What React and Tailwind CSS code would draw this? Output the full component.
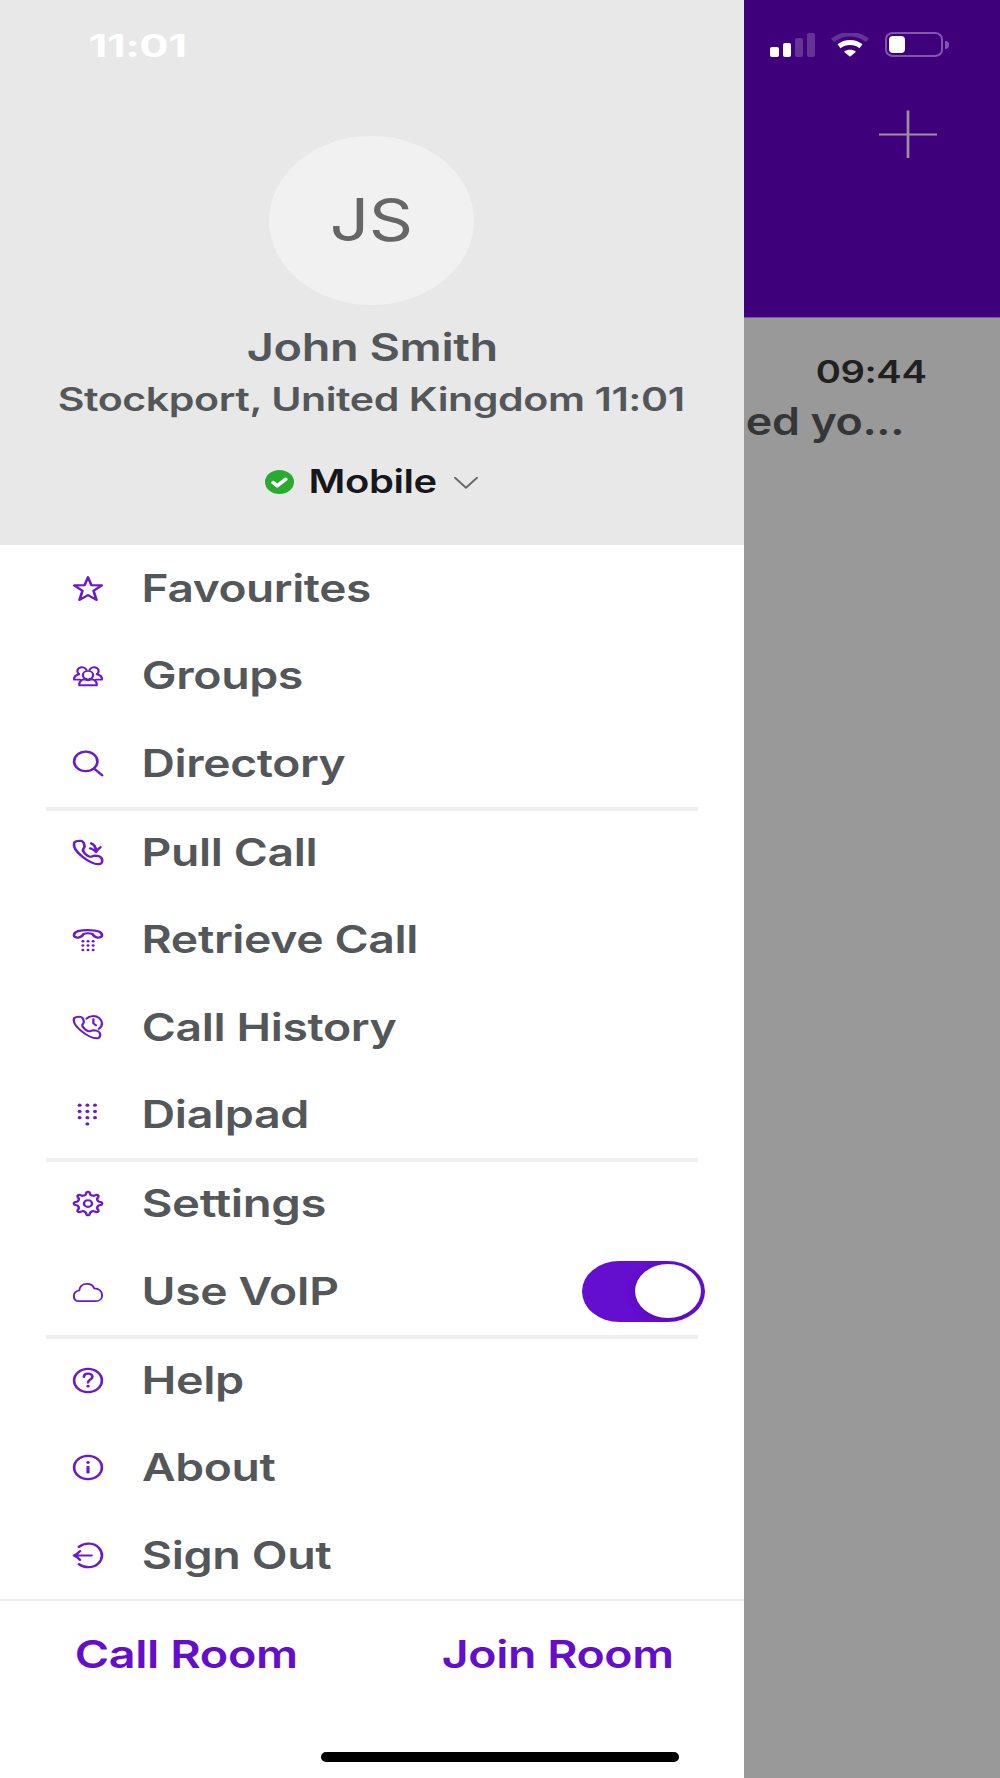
import { useLayoutEffect, useRef } from "react";

// Wide text: the ink of the label fills the width of its box.
function Wide({ children, className = "" }) {
  const box = useRef(null);
  const ink = useRef(null);
  useLayoutEffect(() => {
    const cs = getComputedStyle(ink.current);
    const ctx = document.createElement("canvas").getContext("2d");
    ctx.font = `${cs.fontWeight} ${cs.fontSize} Inter`;
    ctx.letterSpacing = cs.letterSpacing === "normal" ? "0px" : cs.letterSpacing;
    const m = ctx.measureText(children);
    const k = box.current.getBoundingClientRect().width / (m.actualBoundingBoxLeft + m.actualBoundingBoxRight);
    ink.current.style.transform = `translate(${m.actualBoundingBoxLeft * k}px, 0.15px) scaleX(${k})`;
  }, [children]);
  return (
    <span ref={box} className={`block shrink-0 whitespace-nowrap ${className}`}>
      <span ref={ink} className="inline-block origin-left">{children}</span>
    </span>
  );
}

function Icon({ children }) {
  return (
    <svg
      viewBox="0 0 24 24"
      preserveAspectRatio="none"
      className="block h-[25px] w-[30px] shrink-0 overflow-visible"
      fill="none"
      stroke="#6a1bc6"
      strokeWidth="2.150"
      strokeLinecap="round"
      strokeLinejoin="round"
    >
      {children}
    </svg>
  );
}

const dots = (xs, ys, r) =>
  ys.flatMap((y) => xs.map((x) => <circle key={`${x}-${y}`} cx={x} cy={y} r={r} fill="#6a1bc6" stroke="none" />));

const polar = (r, deg) => {
  const a = (deg * Math.PI) / 180;
  return `${(12 + r * Math.cos(a)).toFixed(2)} ${(12 + r * Math.sin(a)).toFixed(2)}`;
};

// Eight pointed, rounded teeth joined by shallow curved valleys.
const gearPath =
  Array.from({ length: 8 }, (_, i) => {
    const t = i * 45;
    return `${i ? "L" : "M"}${polar(8.6, t - 13)}L${polar(10.8, t - 6)}Q${polar(11.9, t)} ${polar(10.8, t + 6)}L${polar(8.6, t + 13)}Q${polar(7.9, t + 22.5)} ${polar(8.6, t + 32)}`;
  }).join("") + "Z";

const icons = {
  star: <path d="M12 1.200l2.700 7.600 8.300.3-6.600 5.100 2.400 8.700-6.800-4.500-6.800 4.500 2.400-8.700L1 9.100l8.300-.3z" />,
  groups: (
    <g strokeWidth="1.800">
      <circle cx="12" cy="11.600" r="4.100" />
      <path d="M5 21.300v-.8c0-2.500 1.400-4.200 3.800-4.900 1.900 1.100 4.500 1.100 6.400 0 2.400.7 3.800 2.400 3.800 4.900v.8z" />
      <path d="M5 10.800A3.700 3.700 0 1 1 10.600 6.400M19 10.800A3.700 3.700 0 1 0 13.400 6.400" />
      <path d="M4.600 10.800C2.200 11.500.8 13.300.8 15.900h5M19.400 10.800c2.400.7 3.800 2.500 3.800 5.100h-5" />
    </g>
  ),
  search: (
    <>
      <circle cx="10.200" cy="10" r="9.300" />
      <path d="M16.800 16.800l6.500 6.500" />
    </>
  ),
  pull: (
    <>
      <path d="M1 2.400C2.300.800 5 .600 6.700.900c1.600.300 2.600 3.600 2.500 5.600-.1 1.500-1.600 2-1.200 3.700.500 2 3 4.700 5 5.700 1.700.800 2.700-.800 4.500-.900 2.600 0 5 1.400 5.600 3.100.5 1.700.2 4.200-1.300 4.900C14.500 24.600-1.200 10.500 1 2.400z" />
      <path d="M14.500 3.200c2.600 1 3.800 3.500 4 8M13.700 8c1.800.8 3.700 1.800 4.700 3.500.9-1.800 1.800-3.200 3.500-4.500" />
    </>
  ),
  retrieve: (
    <>
      <path d="M.8 7.800C.8 4.200 6 2.900 12 2.900s11.200 1.300 11.200 4.900c0 1.700-1.600 2.500-3.400 2.300-2.400-.3-3.200-1.200-3.900-2.900-.4-1.100-2-1.200-3.900-1.200s-3.500.1-3.900 1.200c-.7 1.700-1.500 2.600-3.900 2.900C2.400 10.300.8 9.500.8 7.800z" />
      {dots([7.900, 12, 16.100], [13.600, 17.800, 22], 1.200)}
    </>
  ),
  history: (
    <g strokeWidth="1.850">
      <path d="M.900 3.100C2.200 1.700 4.600 1.500 6.200 1.800c1.500.300 2.500 3.300 2.400 5.100-.1 1.400-1.400 1.900-1.100 3.400.500 1.900 2.700 4.200 4.500 5.200 1.600.700 2.500-.700 4.200-.800 2.400 0 4.800 1.300 5.300 2.900.5 1.500.2 3.900-1.200 4.500C13.500 23.700-1.200 10.500.9 3.100z" />
      <path d="M10.800 3.600C13 .5 18 .1 21 3c3 3 3 7.500-.300 10.300M16.300 4v4l2 1.900" />
    </g>
  ),
  dialpad: (
    <>
      {dots([5.300, 11.500, 17.600], [3, 9, 15], 1.600)}
      {dots([11.500], [21], 1.600)}
    </>
  ),
  settings: (
    <g strokeWidth="2">
      <circle cx="12" cy="12" r="3.200" />
      <path d={gearPath} />
    </g>
  ),
  cloud: (
    <path strokeWidth="1.600" d="M5 21.300C2.300 21.200.7 19.200.7 16.200c0-2.800 1.700-4.700 4.300-5.200C5.300 7.200 7.700 4.600 11 4.600c3.100 0 5.200 1.600 5.900 4.400 3.700-.1 6.400 2.700 6.400 6.500 0 3.400-2.100 5.800-5.300 5.800z" />
  ),
  help: (
    <>
      <circle cx="12" cy="12" r="11.100" />
      <path d="M8.700 8.600c.1-2.100 1.500-3.200 3.300-3.200s3.500 1.200 3.500 2.900c0 2.700-3.500 3-3.500 5.700" />
      <circle cx="12" cy="17.400" r="1.300" fill="#6a1bc6" stroke="none" />
    </>
  ),
  about: (
    <>
      <circle cx="12" cy="12" r="11.100" />
      <path d="M12 10.500v7.200" strokeWidth="2.500" strokeLinecap="butt" />
      <circle cx="12" cy="7.200" r="1.400" fill="#6a1bc6" stroke="none" />
    </>
  ),
  signout: (
    <>
      <path d="M4.700 3.700C9.500-.900 17-.300 20.700 4.700c3.500 4.800 3.300 10.800-.7 15.200C16 24.300 9 24.300 4.700 20.300" />
      <path d="M14.800 12H.9M5.600 7.800C4.200 9.600 2.700 11.200.8 12c1.900.8 3.400 2.400 4.800 4.200" />
    </>
  ),
};

const groups = [
  [
    ["star", "Favourites", "ml-[41px] w-[226px]"],
    ["groups", "Groups", "ml-[40px] w-[159px]"],
    ["search", "Directory", "ml-[41px] w-[201px]"],
  ],
  [
    ["pull", "Pull Call", "ml-[41px] w-[171px]"],
    ["retrieve", "Retrieve Call", "ml-[41px] w-[272px]"],
    ["history", "Call History", "ml-[40px] w-[253px]"],
    ["dialpad", "Dialpad", "ml-[41px] w-[163px]"],
  ],
  [
    ["settings", "Settings", "ml-[40px] w-[182px]"],
    ["cloud", "Use VoIP", "ml-[41px] w-[194px]"],
  ],
  [
    ["help", "Help", "ml-[41px] w-[99px]"],
    ["about", "About", "ml-[39px] w-[133px]"],
    ["signout", "Sign Out", "ml-[40px] w-[188px]"],
  ],
];

function Toggle() {
  return (
    <div className="mr-[39px] ml-auto flex h-[61px] w-[123px] items-center justify-end rounded-[38px/31px] bg-[#640ecf] pr-[4px]">
      <div className="h-[54px] w-[66px] rounded-[50%] bg-white shadow-[-1px_2px_8px_rgba(40,0,100,0.2)]" />
    </div>
  );
}

export default function App() {
  return (
    <div className="relative flex h-[1778px] w-[1000px] overflow-hidden bg-[#999999] font-['Inter',sans-serif] font-semibold tracking-[-0.02em]">
      <aside className="flex w-[744px] shrink-0 flex-col bg-white text-[38.5px] text-[#54575a]">
        <header className="flex h-[545px] shrink-0 flex-col items-center bg-[#e8e8e8] pr-[1px]">
          <div className="h-[90px] w-full pt-[1px] pl-[90px] text-[31px] leading-[90px] font-bold text-white">
            <Wide className="w-[95px]">11:01</Wide>
          </div>
          <div className="mt-[45.500px] flex h-[169px] w-[205px] shrink-0 items-center justify-center rounded-[50%] bg-[#f1f1f1] pr-[2px] text-[58.500px] font-normal text-[#666666]">
            <Wide className="w-[78px]">JS</Wide>
          </div>
          <div className="mt-[18.500px] leading-[48px]">
            <Wide className="w-[247px]">John Smith</Wide>
          </div>
          <div className="mt-[9px] text-[32px] leading-[40px]">
            <Wide className="w-[625px]">Stockport, United Kingdom 11:01</Wide>
          </div>
          <div className="mt-[42px] flex items-center pr-px text-[32px] leading-[40px] text-[#15171c]">
            <svg viewBox="0 0 24 24" preserveAspectRatio="none" className="h-[24px] w-[29px]" fill="none">
              <circle cx="12" cy="12" r="12" fill="#28ab2f" />
              <path d="M6.800 12.600l3.300 3.200 7-6.500" stroke="white" strokeWidth="3.300" strokeLinecap="round" strokeLinejoin="round" />
            </svg>
            <Wide className="ml-[17px] w-[125px]">Mobile</Wide>
            <svg viewBox="0 0 24 12" className="mt-[2px] ml-[18px] h-[12px] w-[24px]" fill="none">
              <path d="M1 .8l11 10L23 .8" stroke="#66686b" strokeWidth="1.900" strokeLinecap="round" strokeLinejoin="round" />
            </svg>
          </div>
        </header>

        <nav className="flex flex-col">
          {groups.map((rows, g) => (
            <div key={g} className="flex flex-col">
              {g > 0 && <div className="mr-[46px] -mb-[2px] ml-[46px] h-[4px] bg-[#efefef]" />}
              {rows.map(([icon, label, place]) => (
                <div key={label} className="flex h-[87.333px] items-center pl-[72.500px] leading-[87px]">
                  <Icon>{icons[icon]}</Icon>
                  <Wide className={place}>{label}</Wide>
                  {icon === "cloud" && <Toggle />}
                </div>
              ))}
            </div>
          ))}
        </nav>

        <footer className="flex grow justify-between border-t-2 border-[#eeeeee] pr-[72px] pl-[76px] leading-[107px] text-[#640ecb]">
          <Wide className="w-[220px]">Call Room</Wide>
          <Wide className="w-[229px]">Join Room</Wide>
        </footer>
      </aside>

      <main className="flex w-[256px] flex-col">
        <div className="flex h-[318px] flex-col border-b border-[#7a5a9c] bg-[#3f007c]">
          <div className="mt-[32px] flex h-[26px] items-start pl-[26px]">
            <div className="flex h-[25px] items-end gap-[4px]">
              <div className="h-[10px] w-[9px] rounded-[2px] bg-white" />
              <div className="h-[14px] w-[8px] rounded-[2px] bg-white" />
              <div className="h-[19px] w-[8px] rounded-[2px] bg-[#653396]" />
              <div className="h-[24px] w-[8px] rounded-[2px] bg-[#653396]" />
            </div>
            <svg viewBox="0 0 38 24" className="mt-px ml-[16px] h-[24px] w-[38px]" fill="none">
              <path d="M1.500 7.300C11.500-.9 26.500-.9 36.500 7.300" stroke="#653396" strokeWidth="4.500" />
              <path d="M8 13.200c6.500-5 15.500-5 22 0" stroke="white" strokeWidth="5" />
              <path d="M13 18.800c3.700-2.600 8.300-2.600 12 0l-6 4.900z" fill="white" />
            </svg>
            <div className="ml-[16px] flex h-[25px] w-[58px] items-center rounded-[8px/7px] border-2 border-[#8257ab] pl-[2px]">
              <div className="h-[17px] w-[16px] rounded-[4px] bg-white" />
            </div>
            <div className="mt-[9px] ml-[2px] h-[8px] w-[4px] rounded-r-full bg-[#8257ab]" />
          </div>
          <svg viewBox="0 0 58 48" className="mt-[52px] ml-[135px] h-[48px] w-[58px]">
            <path d="M0 24.500h58" stroke="#9b909b" strokeWidth="2" />
            <path d="M29 .500v47.500" stroke="#9b909b" strokeWidth="2.700" />
          </svg>
        </div>
        <div className="mt-[34px] pl-[73px] text-[31px] leading-[40px] text-[#202020]">
          <Wide className="w-[109px]">09:44</Wide>
        </div>
        <div className="-mt-px pl-[2.500px] text-[38px] leading-[60px] text-[#343638]">
          <Wide className="w-[155px]">ed yo...</Wide>
        </div>
      </main>

      <div className="absolute top-[1752px] left-[321px] h-[10px] w-[358px] rounded-full bg-black" />
    </div>
  );
}
